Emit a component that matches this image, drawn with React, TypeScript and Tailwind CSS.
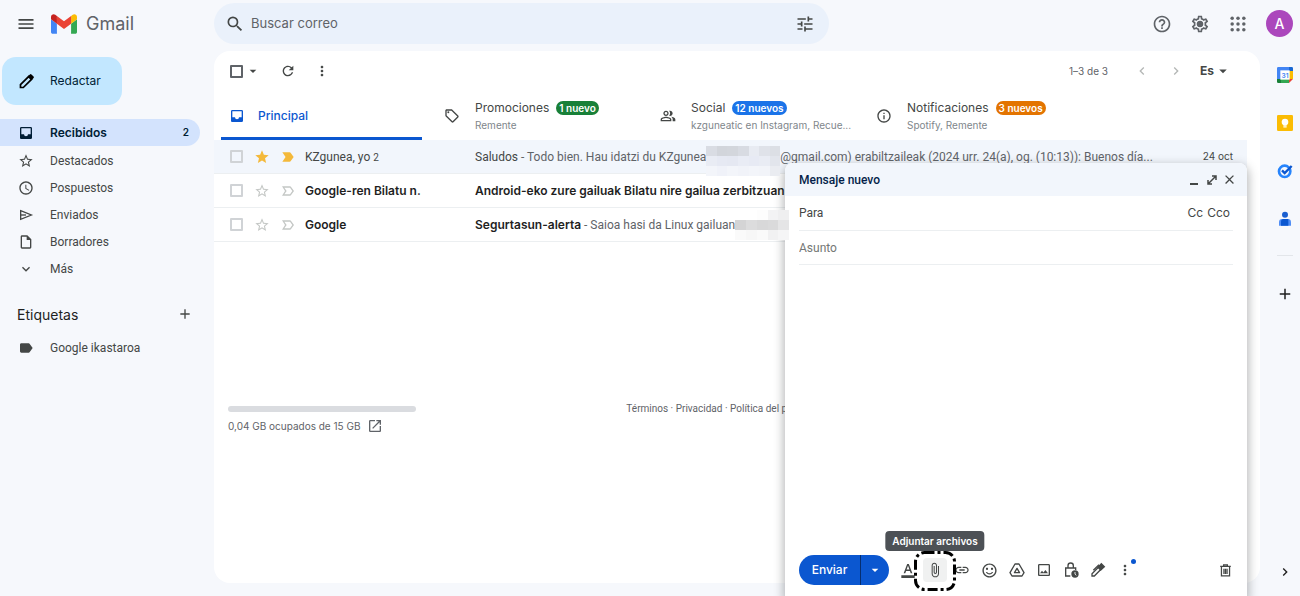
import React, { useState } from 'react';
import type { IconType } from 'react-icons';
import {
  MdAdd,
  MdArrowDropDown,
  MdAttachFile,
  MdChevronLeft,
  MdChevronRight,
  MdClose,
  MdExpandMore,
  MdFormatColorText,
  MdHelpOutline,
  MdInfoOutline,
  MdInsertLink,
  MdLabel,
  MdLabelImportant,
  MdLabelImportantOutline,
  MdMenu,
  MdMoreVert,
  MdOpenInNew,
  MdOutlineImage,
  MdOutlineInsertDriveFile,
  MdOutlinePeopleAlt,
  MdOutlineSell,
  MdOutlineSettings,
  MdRefresh,
  MdSchedule,
  MdSearch,
  MdSentimentSatisfiedAlt,
  MdStar,
  MdStarBorder,
  MdTune,
} from 'react-icons/md';

interface IconProps {
  className?: string;
}

const GmailLogo: React.FC<IconProps> = ({ className }) => (
  <svg viewBox="52 42 88 66" className={className} aria-hidden="true">
    <path fill="#4285f4" d="M58 108h14V74L52 59v43c0 3.32 2.69 6 6 6" />
    <path fill="#34a853" d="M120 108h14c3.32 0 6-2.69 6-6V59l-20 15" />
    <path fill="#fbbc04" d="M120 48v26l20-15v-8c0-7.42-8.47-11.65-14.4-7.2" />
    <path fill="#ea4335" d="M72 74V48l24 18 24-18v26L96 92" />
    <path fill="#c5221f" d="M52 51v8l20 15V48l-5.6-4.2c-5.94-4.45-14.4-.22-14.4 7.2" />
  </svg>
);

const InboxIcon: React.FC<IconProps> = ({ className }) => (
  <svg viewBox="0 0 24 24" className={className} fill="currentColor" aria-hidden="true">
    <path d="M19 3H5a2 2 0 0 0-2 2v14c0 1.100.9 2 2 2h14a2 2 0 0 0 2-2V5a2 2 0 0 0-2-2zm0 11h-4a3 3 0 0 1-6 0H5V5h14z" />
  </svg>
);

const PencilIcon: React.FC<IconProps> = ({ className }) => (
  <svg viewBox="0 0 24 24" className={className} fill="none" stroke="currentColor" strokeWidth="2.4" aria-hidden="true">
    <path d="M3.5 20.5v-4L15 5l4 4L7.5 20.5z" />
    <path d="M14 4.5 16.8 2a1.6 1.6 0 0 1 2.2 0l3 3a1.6 1.6 0 0 1 0 2.2L19.5 10z" fill="currentColor" stroke="none" />
  </svg>
);

const SendIcon: React.FC<IconProps> = ({ className }) => (
  <svg viewBox="0 0 24 24" className={className} fill="none" stroke="currentColor" strokeWidth="2" aria-hidden="true">
    <path d="M4 5.5 20 12 4 18.5z" />
    <path d="M4 12h8" />
  </svg>
);

const AppsIcon: React.FC<IconProps> = ({ className }) => (
  <svg viewBox="0 0 24 24" className={className} fill="currentColor" aria-hidden="true">
    {[5, 12, 19].map((y) => [5, 12, 19].map((x) => <circle key={`${x}-${y}`} cx={x} cy={y} r="2.1" />))}
  </svg>
);

const GearIcon: React.FC<IconProps> = ({ className }) => (
  <svg viewBox="0 0 24 24" className={className} fill="currentColor" aria-hidden="true">
    <MdOutlineSettings size={24} />
    <circle cx="12" cy="12" r="3.6" />
  </svg>
);

const DriveIcon: React.FC<IconProps> = ({ className }) => (
  <svg viewBox="0 0 24 24" className={className} fill="none" stroke="currentColor" strokeWidth="2" strokeLinejoin="round" aria-hidden="true">
    <path d="M9 3h6l7.500 13-3 5h-15l-3-5z" />
    <path d="M12 9.500 15.800 16H8.200z" />
  </svg>
);

const LockClockIcon: React.FC<IconProps> = ({ className }) => (
  <svg viewBox="0 0 24 24" className={className} fill="none" stroke="currentColor" strokeWidth="2" aria-hidden="true">
    <path d="M11 21H4V9h15v3" />
    <path d="M7.500 9V5.500a4 4 0 0 1 8 0V9" />
    <circle cx="18" cy="18" r="5.500" fill="currentColor" stroke="none" />
    <path d="M18 15v3.200l2 1.800" stroke="white" strokeWidth="1.300" />
  </svg>
);

const SignatureIcon: React.FC<IconProps> = ({ className }) => (
  <svg viewBox="0 0 24 24" className={className} fill="none" stroke="currentColor" strokeWidth="2" aria-hidden="true">
    <path d="M3 21v-3.500L14.500 6l3.500 3.500L6.500 21z" />
    <path d="m12 8 5-5.500 4.500 4.500L16 12z" fill="currentColor" />
    <path d="M5 12.500 13.500 4" />
  </svg>
);

const TrashIcon: React.FC<IconProps> = ({ className }) => (
  <svg viewBox="0 0 24 24" className={className} fill="none" stroke="currentColor" strokeWidth="2" aria-hidden="true">
    <path d="M3.500 5.500h17M9 5V3h6v2M5.500 6v14.500h13V6M9.500 9v8.500M12 9v8.500M14.500 9v8.500" />
  </svg>
);

const ExpandIcon: React.FC<IconProps> = ({ className }) => (
  <svg viewBox="0 0 24 24" className={className} fill="none" stroke="currentColor" strokeWidth="3" aria-hidden="true">
    <path d="M12 4h8v8M20 4 4 20M12 20H4v-8" />
  </svg>
);

const CalendarIcon: React.FC<IconProps> = ({ className }) => (
  <svg viewBox="0 0 24 24" className={className} aria-hidden="true">
    <path fill="#4285f4" d="M2 0h20v6H6v12H0V2a2 2 0 0 1 2-2z" />
    <path fill="#1967d2" d="M18 0h4a2 2 0 0 1 2 2v4h-6z" />
    <path fill="#fbbc04" d="M18 6h6v12h-6z" />
    <path fill="#34a853" d="M6 18h12v6H6z" />
    <path fill="#188038" d="M0 18h6v6H2a2 2 0 0 1-2-2z" />
    <path fill="#ea4335" d="M18 18h6l-6 6z" />
    <path fill="white" d="M5 5h14v14H5z" />
    <text x="12" y="16" fontSize="10" fontWeight="600" textAnchor="middle" fill="#4285f4">31</text>
  </svg>
);

const KeepIcon: React.FC<IconProps> = ({ className }) => (
  <svg viewBox="0 0 24 24" className={className} aria-hidden="true">
    <rect width="24" height="24" rx="2" fill="#fbbc04" />
    <circle cx="12" cy="10.500" r="5" fill="white" />
    <path fill="white" d="M9.500 13h5v3h-5zM9.500 17h5v1.800h-5z" />
  </svg>
);

const TasksIcon: React.FC<IconProps> = ({ className }) => (
  <svg viewBox="0 0 24 24" className={className} fill="none" aria-hidden="true">
    <circle cx="11.500" cy="12.500" r="8.500" stroke="#2684fc" strokeWidth="4" />
    <path d="m7.500 11 4 4L22 4.500" stroke="#0b57d0" strokeWidth="3.600" />
  </svg>
);

const ContactsIcon: React.FC<IconProps> = ({ className }) => (
  <svg viewBox="0 0 24 24" className={className} aria-hidden="true">
    <circle cx="12" cy="5.500" r="4.500" fill="#1a5fd0" />
    <path fill="#4f8df5" d="M3 22v-5a5 5 0 0 1 5-5h8a5 5 0 0 1 5 5v5z" />
    <path fill="#0b57d0" d="M6 22v-6a4 4 0 0 1 4-4h7v10z" />
  </svg>
);

interface Folder {
  label: string;
  icon: React.FC<IconProps> | IconType;
  count?: number;
}

const folders: Folder[] = [
  { label: 'Recibidos', icon: InboxIcon, count: 2 },
  { label: 'Destacados', icon: MdStarBorder },
  { label: 'Pospuestos', icon: MdSchedule },
  { label: 'Enviados', icon: SendIcon },
  { label: 'Borradores', icon: MdOutlineInsertDriveFile },
  { label: 'Más', icon: MdExpandMore },
];

const categories = [
  { label: 'Promociones', icon: MdOutlineSell, badge: '1 nuevo', color: 'bg-[#188038]', senders: 'Remente' },
  { label: 'Social', icon: MdOutlinePeopleAlt, badge: '12 nuevos', color: 'bg-[#1a73e8]', senders: 'kzguneatic en Instagram, Recue...' },
  { label: 'Notificaciones', icon: MdInfoOutline, badge: '3 nuevos', color: 'bg-[#e37400]', senders: 'Spotify, Remente' },
];

const Checkbox: React.FC<{ label: string; className: string }> = ({ label, className }) => (
  <input
    type="checkbox"
    aria-label={label}
    className={`size-[13px] shrink-0 appearance-none rounded-[1px] checked:bg-[#0b57d0] ${className}`}
  />
);

// Mosaic that hides private text
const Redacted: React.FC<{ cells: string[]; className: string }> = ({ cells, className }) => (
  <span className={`relative z-20 grid shrink-0 auto-rows-[10px] ${className}`}>
    {cells.map((cell, i) => (
      <span key={i} className={cell} />
    ))}
  </span>
);

const emailCells = [
  'bg-[#d9dce3]', 'bg-[#d2d5db]', 'bg-[#d3d6dc]', 'bg-[#d8dbe2]', 'bg-[#e8ebf2]', 'bg-[#dfe2e9]', 'bg-[#dcdfe5]',
  'bg-[#e9ecf4]', 'bg-[#e6e9f3]', 'bg-[#e5e8f2]', 'bg-[#e9ecf5]', 'bg-[#e7eaf4]', 'bg-[#e9ecf4]', 'bg-[#e2e5ec]',
  'bg-[#f3f5fa]', 'bg-[#f0f2f9]', 'bg-[#f3f5fa]', 'bg-[#f1f3f9]', 'bg-[#f3f5fa]', 'bg-[#f2f4f9]', 'bg-[#eaecf1]',
];

const deviceCells = [
  'bg-white', 'bg-white', 'bg-[#fdfdfd]', 'bg-[#f3f3f4]', 'bg-[#efeff0]',
  'bg-[#d4d4d5]', 'bg-[#dcdcdd]', 'bg-[#d8d8d9]', 'bg-[#dadadb]', 'bg-[#e5e5e6]',
  'bg-[#fafafa]', 'bg-[#f7f7f7]', 'bg-[#fafafa]', 'bg-[#f1f1f2]', 'bg-[#f5f5f6]',
];

interface MailRowProps {
  sender: React.ReactNode;
  name: string;
  read?: boolean;
  date?: string;
  children: React.ReactNode;
}

const MailRow: React.FC<MailRowProps> = ({ sender, name, read, date, children }) => (
  <li
    className={`mr-[13px] flex h-[34px] items-center border-b border-[#eceff1] pr-[14px] pl-4 text-[12px] ${
      read ? 'bg-[#f2f6fc]' : 'bg-white'
    }`}
  >
    <Checkbox label={`Seleccionar ${name}`} className="border-2 border-[#d0d3d6]" />
    <button aria-label="Destacar" className={`ml-[11px] ${read ? 'text-[#f4b93a]' : 'text-[#c4c7c5]'}`}>
      {read ? <MdStar className="size-4" /> : <MdStarBorder className="size-4" />}
    </button>
    <button aria-label="Importante" className={`ml-[10px] ${read ? 'text-[#f4b93a]' : 'text-[#c4c7c5]'}`}>
      {read ? <MdLabelImportant className="size-4" /> : <MdLabelImportantOutline className="size-4" />}
    </button>
    <span
      className={`ml-[9px] w-[170px] shrink-0 truncate ${
        read ? "font-['Roboto',sans-serif] text-[#444746]" : 'font-semibold text-[#1f1f1f]'
      }`}
    >
      {sender}
    </span>
    <span className="flex min-w-0 flex-1 items-center font-['Roboto',sans-serif] whitespace-pre text-[#5f6368]">{children}</span>
    {date && <span className="text-[10px] text-[#444746]">{date}</span>}
  </li>
);

const Header: React.FC = () => (
  <header className="flex h-[51px] shrink-0 items-start pt-[3px] text-[#444746]">
    <div className="flex h-[41px] w-[214px] shrink-0 items-center pl-4">
      <button aria-label="Menú principal">
        <MdMenu className="size-5" />
      </button>
      <a href="#inbox" className="ml-[15px] flex items-center gap-[9px] text-[18px] text-[#5f6368]">
        <GmailLogo className="h-5 w-[26px]" />
        Gmail
      </a>
    </div>
    <form className="flex h-[41px] max-w-[615px] flex-1 items-center rounded-full bg-[#eaf1fb] pr-[14px] pl-[11px]">
      <button type="button" aria-label="Buscar">
        <MdSearch className="size-5" />
      </button>
      <input
        aria-label="Buscar correo"
        placeholder="Buscar correo"
        className="ml-[6px] min-w-0 flex-1 text-[13px] outline-none placeholder:text-[#5f6368]"
      />
      <button type="button" aria-label="Opciones de búsqueda">
        <MdTune className="size-5" />
      </button>
    </form>
    <div className="ml-auto flex h-[41px] items-center gap-[18px] pr-[7px] text-[#5f6368]">
      <button aria-label="Ayuda">
        <MdHelpOutline className="size-5" />
      </button>
      <button aria-label="Configuración">
        <GearIcon className="size-5" />
      </button>
      <button aria-label="Aplicaciones">
        <AppsIcon className="size-5" />
      </button>
      <button aria-label="Cuenta" className="size-[27px] rounded-full bg-[#ab47bc] text-[14px] font-medium text-white">
        A
      </button>
    </div>
  </header>
);

const Sidebar: React.FC = () => (
  <aside className="w-[214px] shrink-0 pt-[6px] text-[12px] text-[#444746]">
    <button className="ml-[2px] flex h-12 w-[120px] items-center rounded-[14px] bg-[#c2e7ff] pl-4 text-[#001d35]">
      <PencilIcon className="size-[17px] text-black" />
      <span className="ml-[15px]">Redactar</span>
    </button>
    <nav className="mt-[14px] mr-[14px]">
      {folders.map(({ label, icon: Icon, count }) => (
        <a
          key={label}
          href={`#${label.toLowerCase()}`}
          className={`flex h-[27px] items-center rounded-r-full pr-[11px] pl-[18px] ${
            count ? 'mb-px bg-[#d3e3fd] font-semibold text-[#001d35]' : "font-['Roboto',sans-serif]"
          }`}
        >
          <Icon className="size-4" />
          <span className="ml-4 flex-1">{label}</span>
          {count && <span className="text-[10px]">{count}</span>}
        </a>
      ))}
    </nav>
    <div className="mt-5 flex h-6 items-center justify-between pr-[21px] pl-[17px]">
      <h2 className="text-[14px] text-[#1f1f1f]">Etiquetas</h2>
      <button aria-label="Crear etiqueta">
        <MdAdd className="size-4" />
      </button>
    </div>
    <a href="#google-ikastaroa" className="mt-2 flex h-[27px] items-center pl-[18px] font-['Roboto',sans-serif]">
      <MdLabel className="size-4" />
      <span className="ml-4">Google ikastaroa</span>
    </a>
  </aside>
);

const Toolbar: React.FC = () => (
  <div className="flex h-10 items-center pr-[28px] pl-4 text-[#444746]">
    <Checkbox label="Seleccionar todo" className="border-2 border-[#5f6368]" />
    <button aria-label="Opciones de selección" className="ml-[2px]">
      <MdArrowDropDown className="size-4" />
    </button>
    <button aria-label="Actualizar" className="ml-[19px]">
      <MdRefresh className="size-4" />
    </button>
    <button aria-label="Más opciones" className="ml-[18px]">
      <MdMoreVert className="size-4" />
    </button>
    <span className="ml-auto text-[10px] text-[#5f6368]">1–3 de 3</span>
    <button aria-label="Más recientes" disabled className="ml-[26px] text-[#b4b7b6]">
      <MdChevronLeft className="size-4" />
    </button>
    <button aria-label="Anteriores" disabled className="ml-[18px] text-[#b4b7b6]">
      <MdChevronRight className="size-4" />
    </button>
    <button aria-label="Herramientas de introducción" className="ml-4 flex items-center text-[12px] font-bold">
      Es
      <MdArrowDropDown className="size-[18px]" />
    </button>
  </div>
);

const Tabs: React.FC = () => (
  <div role="tablist" className="flex h-[49px] text-[12px] text-[#444746]">
    <button
      role="tab"
      aria-selected="true"
      className="mr-[10px] ml-[7px] flex w-[201px] items-center border-b-[3px] border-[#0b57d0] pt-[3px] pl-2 font-medium text-[#0b57d0]"
    >
      <InboxIcon className="size-4" />
      <span className="ml-[13px]">Principal</span>
    </button>
    {categories.map(({ label, icon: Icon, badge, color, senders }) => (
      <button key={label} role="tab" aria-selected="false" className="flex w-[216px] items-center pl-3 text-left">
        <Icon className="size-4 shrink-0" />
        <span className="ml-[15px] min-w-0">
          <span className="flex items-center gap-[7px] whitespace-nowrap">
            {label}
            <span className={`rounded-full px-[3px] text-[10px] leading-[14px] font-semibold text-white ${color}`}>{badge}</span>
          </span>
          <span className="block text-[10px] leading-4 whitespace-nowrap text-[#80868b]">{senders}</span>
        </span>
      </button>
    ))}
  </div>
);

const Inbox: React.FC = () => (
  <main className="mb-[13px] min-w-0 flex-1 rounded-2xl bg-white">
    <Toolbar />
    <Tabs />
    <ul>
      <MailRow
        name="KZgunea"
        sender={
          <>
            KZgunea, yo <span className="text-[10px]">2</span>
          </>
        }
        read
        date="24 oct"
      >
        <span className="text-[#444746]">Saludos</span>
        <span> - Todo bien. Hau idatzi du KZgunea</span>
        <Redacted cells={emailCells} className="-mb-2 w-[74px] grid-cols-7" />
        <span>@gmail.com) erabiltzaileak (2024 urr. 24(a), og. (10:13)): Buenos día...</span>
      </MailRow>
      <MailRow name="Google-ren Bilatu" sender="Google-ren Bilatu n.">
        <span className="truncate font-['Inter',sans-serif] font-semibold text-[#1f1f1f]">
          Android-eko zure gailuak Bilatu nire gailua zerbitzuan gehitu dira
        </span>
      </MailRow>
      <MailRow name="Google" sender="Google">
        <span className="font-['Inter',sans-serif] font-semibold text-[#1f1f1f]">Segurtasun-alerta</span>
        <span> - Saioa hasi da Linux gailuan</span>
        <Redacted cells={deviceCells} className="w-[54px] grid-cols-5" />
      </MailRow>
    </ul>
    <footer className="mt-[159px] mr-[13px] grid grid-cols-3 pl-[14px] text-[10px] text-[#5f6368]">
      <div>
        <div className="mt-[5px] h-[6px] w-[188px] rounded-full bg-[#dadce0]" />
        <a href="#storage" className="mt-[6px] flex items-center gap-[7px] text-[#5f6368]">
          0,04 GB ocupados de 15 GB
          <MdOpenInNew className="size-4" />
        </a>
      </div>
      <p className="pr-6 text-center font-['Roboto',sans-serif] whitespace-nowrap">
        <a href="#terms">Términos</a> · <a href="#privacy">Privacidad</a> · <a href="#policy">Política del programa</a>
      </p>
    </footer>
  </main>
);

const SidePanel: React.FC = () => (
  <aside className="flex w-10 shrink-0 flex-col items-center pt-4 pb-4 pl-[9px] text-[#1f1f1f]">
    <div className="flex flex-col gap-8">
      <button aria-label="Calendar">
        <CalendarIcon className="size-4" />
      </button>
      <button aria-label="Keep">
        <KeepIcon className="size-4" />
      </button>
      <button aria-label="Tasks">
        <TasksIcon className="size-4" />
      </button>
      <button aria-label="Contactos">
        <ContactsIcon className="size-4" />
      </button>
    </div>
    <hr className="mt-7 w-4 border-[#e3e6ea]" />
    <button aria-label="Obtener complementos" className="mt-[29px]">
      <MdAdd className="size-[18px]" />
    </button>
    <button aria-label="Ocultar panel" className="mt-auto">
      <MdChevronRight className="size-4" />
    </button>
  </aside>
);

const Compose: React.FC = () => {
  const [to, setTo] = useState('');
  const [subject, setSubject] = useState('');

  return (
    <section
      aria-label="Mensaje nuevo"
      className="absolute right-[53px] bottom-0 z-10 flex h-[433px] w-[462px] flex-col rounded-t-lg bg-white text-[12px] text-[#444746] shadow-[0_4px_10px_2px_rgba(60,64,67,0.35)]"
    >
      <div className="flex h-[33px] shrink-0 items-center rounded-t-lg bg-[#f2f6fc] pr-[10px] pl-[14px]">
        <h2 className="flex-1 font-['Roboto',sans-serif] font-medium text-[#041e49]">Mensaje nuevo</h2>
        <button aria-label="Minimizar" className="flex h-3 w-2 items-end pb-px">
          <span className="h-[2px] w-full bg-[#444746]" />
        </button>
        <button aria-label="Pantalla completa" className="ml-2">
          <ExpandIcon className="size-3" />
        </button>
        <button aria-label="Cerrar" className="ml-1">
          <MdClose className="size-[15px]" />
        </button>
      </div>
      <div className="mx-[14px] flex h-[35px] shrink-0 items-center border-b border-[#eceff1]">
        <label htmlFor="to" className="font-['Roboto',sans-serif]">Para</label>
        <input id="to" value={to} onChange={(e) => setTo(e.target.value)} className="ml-2 min-w-0 flex-1 outline-none" />
        <button>Cc</button>
        <button className="mr-[3px] ml-1">Cco</button>
      </div>
      <input
        aria-label="Asunto"
        placeholder="Asunto"
        value={subject}
        onChange={(e) => setSubject(e.target.value)}
        className="mx-[14px] h-[34px] shrink-0 border-b border-[#eceff1] font-['Roboto',sans-serif] outline-none placeholder:text-[#747775]"
      />
      <textarea aria-label="Cuerpo del mensaje" className="min-h-0 flex-1 resize-none px-[14px] py-2 outline-none" />
      <div className="mb-[11px] flex h-[30px] shrink-0 items-center pr-[14px] pl-[14px]">
        <div className="flex h-[30px] w-[90px] overflow-hidden rounded-full bg-[#0b57d0] text-white">
          <button className="w-[62px] border-r border-[#062e6f] font-medium">Enviar</button>
          <button aria-label="Más opciones de envío" className="flex flex-1 items-center justify-center">
            <MdArrowDropDown className="size-4" />
          </button>
        </div>
        <div className="ml-[11px] flex items-center gap-[11px]">
          <button aria-label="Formato">
            <MdFormatColorText className="size-4" />
          </button>
          <div className="relative size-4">
            <button aria-label="Adjuntar archivos" className="-m-1 flex size-6 items-center justify-center rounded-sm bg-[#f0f1f1]">
              <MdAttachFile className="size-4" />
            </button>
            <div
              role="tooltip"
              className="absolute bottom-[27px] left-1/2 -translate-x-1/2 rounded-sm bg-[#4d5156] px-[7px] text-[10px] leading-5 font-semibold whitespace-nowrap text-white"
            >
              Adjuntar archivos
            </div>
            <svg viewBox="0 0 42 42" className="pointer-events-none absolute -top-[12px] -left-[13px] size-[42px] max-w-none" fill="none">
              <rect x="1.500" y="2.500" width="39" height="37" rx="9" stroke="black" strokeWidth="3" strokeDasharray="10 3 3 3" />
            </svg>
          </div>
          <button aria-label="Insertar enlace">
            <MdInsertLink className="size-4" />
          </button>
          <button aria-label="Insertar emoji">
            <MdSentimentSatisfiedAlt className="size-[17px]" />
          </button>
          <button aria-label="Insertar desde Drive">
            <DriveIcon className="size-4" />
          </button>
          <button aria-label="Insertar foto">
            <MdOutlineImage className="size-4" />
          </button>
          <button aria-label="Modo confidencial">
            <LockClockIcon className="size-4" />
          </button>
          <button aria-label="Insertar firma">
            <SignatureIcon className="size-4" />
          </button>
          <button aria-label="Más opciones" className="relative">
            <MdMoreVert className="size-4" />
            <span className="absolute -top-[3px] -right-[3px] size-[5px] rounded-full bg-[#0b57d0]" />
          </button>
        </div>
        <button aria-label="Descartar borrador" className="ml-auto">
          <TrashIcon className="size-[15px]" />
        </button>
      </div>
    </section>
  );
};

const App: React.FC = () => (
  <div className="relative flex h-screen flex-col overflow-hidden bg-[#f6f8fc] font-['Inter',sans-serif]">
    <Header />
    <div className="flex min-h-0 flex-1">
      <Sidebar />
      <Inbox />
      <SidePanel />
    </div>
    <Compose />
  </div>
);

export default App;
